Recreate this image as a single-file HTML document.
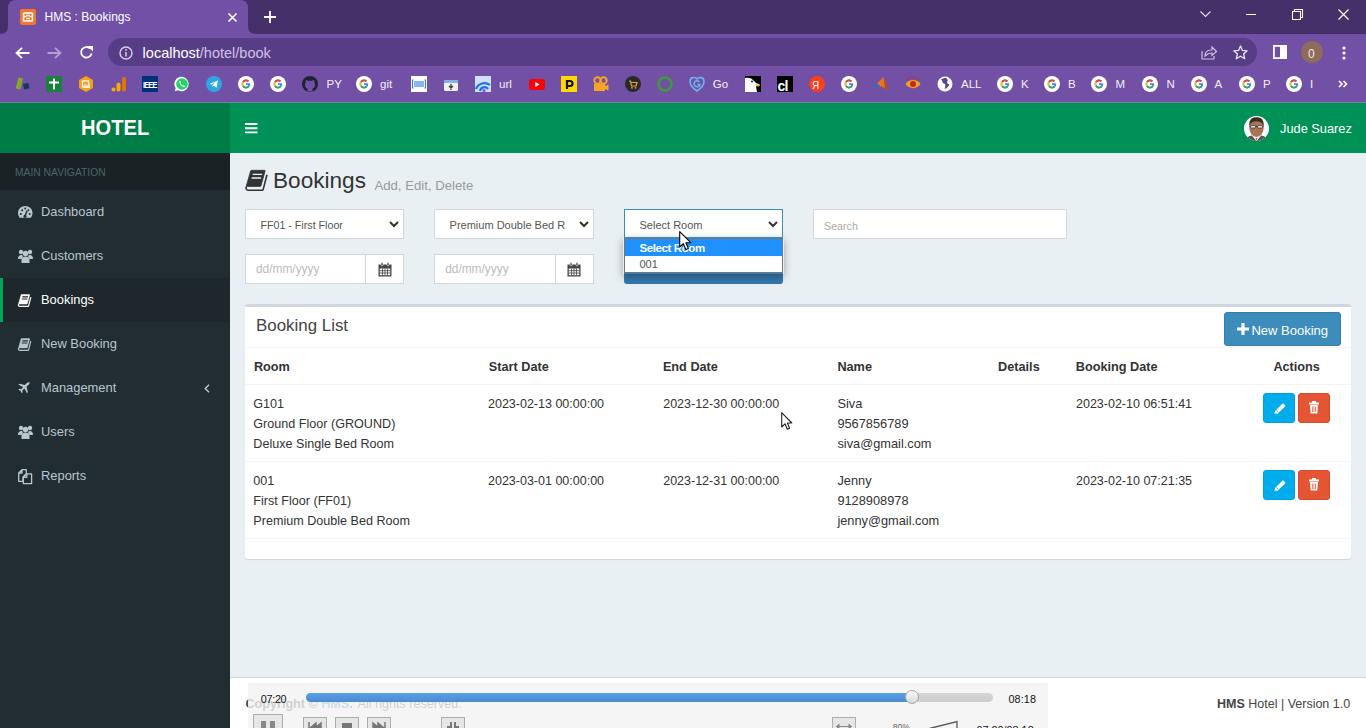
<!DOCTYPE html>
<html><head><meta charset="utf-8"><style>
*{box-sizing:border-box;margin:0;padding:0}
html,body{width:1366px;height:728px;overflow:hidden;background:#e9f0f3;font-family:"Liberation Sans",sans-serif;color:#333;position:relative}
.a{position:absolute}
.t{position:absolute;line-height:1;white-space:nowrap}
svg{position:absolute;overflow:visible}
</style></head><body>
<div class="a" style="left:0;top:0;width:1366px;height:34px;background:#45306a"></div>
<div class="a" style="left:0;top:34px;width:1366px;height:68px;background:#7150a6"></div>
<svg style="left:0;top:0" width="260" height="40"><path d="M0 34 Q8 34 8 26 L8 8 Q8 0 16 0 L240 0 Q248 0 248 8 L248 26 Q248 34 256 34 Z" fill="#7150a6"/></svg>
<div class="a" style="left:20px;top:9px;width:16px;height:16px;background:#f0782a;border-radius:2px"></div>
<svg style="left:20px;top:9px" width="16" height="16"><path d="M4.5 4 C3 4 3 7 4.5 7.5 C3 8 3 12 4.5 12 L11.5 12 C13 12 13 8 11.5 7.5 C13 7 13 4 11.5 4 Z M6 6.5 L10 6.5 M6 9.5 L10 9.5" stroke="#fff" stroke-width="1.6" fill="none"/></svg>
<div class="t" style="left:44.5px;top:11.34px;font-size:12px;color:#fff;font-weight:normal;">HMS : Bookings</div>

<svg style="left:228px;top:13px" width="9" height="9"><path d="M0.5 0.5 L8.5 8.5 M8.5 0.5 L0.5 8.5" stroke="#fff" stroke-width="1.6"/></svg>
<svg style="left:264px;top:11px" width="12" height="12"><path d="M6 0 V12 M0 6 H12" stroke="#fff" stroke-width="1.8"/></svg>
<svg style="left:1200px;top:11px" width="11" height="6"><path d="M0.5 0.5 L5.5 5.5 L10.5 0.5" stroke="#e8e0f0" stroke-width="1.1" fill="none"/></svg>
<div class="a" style="left:1246px;top:14px;width:10px;height:1px;background:#fff"></div>
<svg style="left:1292px;top:9px" width="11" height="11"><path d="M2.5 2.5 V0.5 H10.5 V8.5 H8.5 M0.5 2.5 H8.5 V10.5 H0.5 Z" stroke="#fff" stroke-width="1.1" fill="none"/></svg>
<svg style="left:1338px;top:9px" width="11" height="11"><path d="M0.5 0.5 L10.5 10.5 M10.5 0.5 L0.5 10.5" stroke="#fff" stroke-width="1.2"/></svg>
<svg style="left:15px;top:47px" width="15" height="12"><path d="M7 0.8 L1.5 6 L7 11.2 M1.5 6 H14.5" stroke="#fff" stroke-width="1.8" fill="none"/></svg>
<svg style="left:47px;top:47px" width="15" height="12"><path d="M8 0.8 L13.5 6 L8 11.2 M13.5 6 H0.5" stroke="#b49fd6" stroke-width="1.8" fill="none"/></svg>
<svg style="left:79px;top:45px" width="15" height="15"><path d="M12.6 8.5 A5.3 5.3 0 1 1 11.2 3.6" stroke="#fff" stroke-width="1.8" fill="none"/><path d="M8.5 1 L14 1 L14 6.5 Z" fill="#fff"/></svg>
<div class="a" style="left:108px;top:38px;width:1149px;height:28px;background:#573d86;border-radius:14px"></div>
<svg style="left:119px;top:46px" width="14" height="14"><circle cx="7" cy="7" r="6" stroke="#d8cdea" stroke-width="1.4" fill="none"/><path d="M7 6 V10.5" stroke="#d8cdea" stroke-width="1.5"/><circle cx="7" cy="3.9" r="0.9" fill="#d8cdea"/></svg>
<div class="t" style="left:142.6px;top:45.53px;font-size:14.5px;color:#fff;font-weight:normal;">localhost<span style="color:#cfc2e6">/hotel/book</span></div>

<svg style="left:1201px;top:45px" width="16" height="15"><path d="M1 6 V14 H13 V11" stroke="#cdbfe3" stroke-width="1.2" fill="none"/><path d="M4 11 C4 6 8 5 11 5 V2 L15.5 6.5 L11 10.5 V8 C8 8 6 9 4 11 Z" stroke="#cdbfe3" stroke-width="1.2" fill="none"/></svg>
<svg style="left:1233px;top:45px" width="15" height="15"><path d="M7.5 1 L9.4 5.4 L14.2 5.8 L10.6 9 L11.7 13.7 L7.5 11.2 L3.3 13.7 L4.4 9 L0.8 5.8 L5.6 5.4 Z" stroke="#ece6f5" stroke-width="1.3" fill="none" stroke-linejoin="round"/></svg>
<svg style="left:1273px;top:45px" width="14" height="14"><rect x="0.9" y="0.9" width="12.2" height="12.2" stroke="#fff" stroke-width="1.8" fill="none"/><rect x="7" y="1" width="6" height="12" fill="#fff"/></svg>
<div class="a" style="left:1301px;top:41px;width:22px;height:22px;border-radius:50%;background:#8e6b5c"></div>
<div class="t" style="left:1308px;top:47.54px;font-size:12px;color:#f3e8e0;font-weight:normal;">0</div>

<svg style="left:1342px;top:46px" width="4" height="14"><circle cx="2" cy="2" r="1.6" fill="#fff"/><circle cx="2" cy="7" r="1.6" fill="#fff"/><circle cx="2" cy="12" r="1.6" fill="#fff"/></svg>
<svg style="left:14px;top:76px" width="16" height="16"><path d="M1.5 12.5 L4.5 1.5 L9 2.5 L6.5 13.5 Z" fill="#8aa62a"/><rect x="9.5" y="7.5" width="5.5" height="5.5" transform="rotate(-12 12 10)" fill="#123a5c"/></svg>
<div class="a" style="left:46px;top:76px;width:16px;height:16px;background:#188038"></div><svg style="left:46px;top:76px" width="16" height="16"><path d="M3 6.5 H13 M8 2.5 V13.5" stroke="#fff" stroke-width="2"/></svg>
<svg style="left:78px;top:76px" width="16" height="16"><path d="M8 0 L15 4 V12 L8 16 L1 12 V4 Z" fill="#f4a11a"/><rect x="4.5" y="5" width="6" height="6" stroke="#fff" stroke-width="1.2" fill="none"/><path d="M7 8 V12 M9 9 V12 M11 7 V12" stroke="#fff" stroke-width="1"/></svg>
<svg style="left:111px;top:76px" width="16" height="16"><circle cx="2.5" cy="13.5" r="2" fill="#f9ab00"/><rect x="5.5" y="6.5" width="4" height="9" rx="2" fill="#f9ab00"/><rect x="11" y="1" width="4" height="14.5" rx="2" fill="#e37400"/></svg>
<div class="a" style="left:142px;top:76px;width:16px;height:16px;background:#00307a"></div>
<div class="t" style="left:143px;top:81.85px;font-size:7.5px;color:#fff;font-weight:bold;letter-spacing:-0.9px;transform:scaleY(1.3);transform-origin:0 70%">IEEE</div>

<svg style="left:174px;top:76px" width="16" height="16"><path d="M8 0.8 A7.2 7.2 0 1 1 4 14.3 L0.8 15.2 L1.7 12.1 A7.2 7.2 0 0 1 8 0.8 Z" fill="#fff"/><circle cx="8" cy="8" r="5.8" fill="#25d366"/><path d="M5.5 4.8 C5 5.5 5 7 6.5 9 C8 10.8 9.8 11.5 10.6 11 L11 10 L9.6 9.2 L9 9.8 C8.2 9.5 7 8.3 6.6 7.5 L7.1 6.8 L6.4 5 Z" fill="#fff"/></svg>
<svg style="left:206px;top:76px" width="16" height="16"><circle cx="8" cy="8" r="8" fill="#2ea6e3"/><path d="M3.5 7.8 L12 4.5 L10.6 11.8 L7.8 9.7 L6.4 11 L6.5 9 L10.5 5.6 L5.6 8.6 Z" fill="#fff"/></svg>
<svg style="left:238px;top:76px" width="16" height="16"><circle cx="8" cy="8" r="8" fill="#fff"/><path d="M11.9 7.3 H8 V9 H10.2 C9.9 10.2 9 10.8 8 10.8 C6.4 10.8 5.2 9.5 5.2 8 C5.2 6.5 6.4 5.2 8 5.2 C8.7 5.2 9.3 5.4 9.8 5.9 L11 4.7 C10.2 4 9.2 3.6 8 3.6 C5.6 3.6 3.6 5.6 3.6 8 C3.6 10.4 5.6 12.4 8 12.4 C10.4 12.4 12.2 10.7 12.2 8.1 C12.2 7.8 12 7.5 11.9 7.3 Z" fill="#4a86e8"/><path d="M3.6 8 C3.6 6.9 4 6 4.6 5.2 L5.9 6.3 C5.5 6.8 5.2 7.4 5.2 8 C5.2 8.6 5.4 9.2 5.8 9.7 L4.6 10.8 C4 10 3.6 9.1 3.6 8 Z" fill="#fbbc05"/><path d="M4.6 5.2 C5.4 4.2 6.6 3.6 8 3.6 C9.2 3.6 10.2 4 11 4.7 L9.8 5.9 C9.3 5.4 8.7 5.2 8 5.2 C7.1 5.2 6.4 5.6 5.9 6.3 Z" fill="#ea4335"/><path d="M4.6 10.8 L5.8 9.7 C6.3 10.4 7.1 10.8 8 10.8 C8.8 10.8 9.5 10.5 10 10 L11.3 11.1 C10.5 11.9 9.3 12.4 8 12.4 C6.6 12.4 5.4 11.8 4.6 10.8 Z" fill="#34a853"/></svg>
<svg style="left:270px;top:76px" width="16" height="16"><circle cx="8" cy="8" r="8" fill="#fff"/><path d="M11.9 7.3 H8 V9 H10.2 C9.9 10.2 9 10.8 8 10.8 C6.4 10.8 5.2 9.5 5.2 8 C5.2 6.5 6.4 5.2 8 5.2 C8.7 5.2 9.3 5.4 9.8 5.9 L11 4.7 C10.2 4 9.2 3.6 8 3.6 C5.6 3.6 3.6 5.6 3.6 8 C3.6 10.4 5.6 12.4 8 12.4 C10.4 12.4 12.2 10.7 12.2 8.1 C12.2 7.8 12 7.5 11.9 7.3 Z" fill="#4a86e8"/><path d="M3.6 8 C3.6 6.9 4 6 4.6 5.2 L5.9 6.3 C5.5 6.8 5.2 7.4 5.2 8 C5.2 8.6 5.4 9.2 5.8 9.7 L4.6 10.8 C4 10 3.6 9.1 3.6 8 Z" fill="#fbbc05"/><path d="M4.6 5.2 C5.4 4.2 6.6 3.6 8 3.6 C9.2 3.6 10.2 4 11 4.7 L9.8 5.9 C9.3 5.4 8.7 5.2 8 5.2 C7.1 5.2 6.4 5.6 5.9 6.3 Z" fill="#ea4335"/><path d="M4.6 10.8 L5.8 9.7 C6.3 10.4 7.1 10.8 8 10.8 C8.8 10.8 9.5 10.5 10 10 L11.3 11.1 C10.5 11.9 9.3 12.4 8 12.4 C6.6 12.4 5.4 11.8 4.6 10.8 Z" fill="#34a853"/></svg>
<svg style="left:302px;top:76px" width="16" height="16"><circle cx="8" cy="8" r="8" fill="#1f2331"/><path d="M5.5 15.5 V12.5 C4 12.3 3 11 3 8.5 C3 7.5 3.3 6.8 3.8 6.3 C3.6 5.7 3.6 4.8 4 4 C4.8 4 5.5 4.4 6.2 4.9 C7.3 4.6 8.7 4.6 9.8 4.9 C10.5 4.4 11.2 4 12 4 C12.4 4.8 12.4 5.7 12.2 6.3 C12.7 6.8 13 7.5 13 8.5 C13 11 12 12.3 10.5 12.5 V15.5 Z" fill="#7150a6"/></svg>
<div class="t" style="left:326.6px;top:79.47px;font-size:11.5px;color:#f4f0fa;font-weight:normal;">PY</div>

<svg style="left:356px;top:76px" width="16" height="16"><circle cx="8" cy="8" r="8" fill="#fff"/><path d="M11.9 7.3 H8 V9 H10.2 C9.9 10.2 9 10.8 8 10.8 C6.4 10.8 5.2 9.5 5.2 8 C5.2 6.5 6.4 5.2 8 5.2 C8.7 5.2 9.3 5.4 9.8 5.9 L11 4.7 C10.2 4 9.2 3.6 8 3.6 C5.6 3.6 3.6 5.6 3.6 8 C3.6 10.4 5.6 12.4 8 12.4 C10.4 12.4 12.2 10.7 12.2 8.1 C12.2 7.8 12 7.5 11.9 7.3 Z" fill="#4a86e8"/><path d="M3.6 8 C3.6 6.9 4 6 4.6 5.2 L5.9 6.3 C5.5 6.8 5.2 7.4 5.2 8 C5.2 8.6 5.4 9.2 5.8 9.7 L4.6 10.8 C4 10 3.6 9.1 3.6 8 Z" fill="#fbbc05"/><path d="M4.6 5.2 C5.4 4.2 6.6 3.6 8 3.6 C9.2 3.6 10.2 4 11 4.7 L9.8 5.9 C9.3 5.4 8.7 5.2 8 5.2 C7.1 5.2 6.4 5.6 5.9 6.3 Z" fill="#ea4335"/><path d="M4.6 10.8 L5.8 9.7 C6.3 10.4 7.1 10.8 8 10.8 C8.8 10.8 9.5 10.5 10 10 L11.3 11.1 C10.5 11.9 9.3 12.4 8 12.4 C6.6 12.4 5.4 11.8 4.6 10.8 Z" fill="#34a853"/></svg>
<div class="t" style="left:380px;top:79.47px;font-size:11.5px;color:#f4f0fa;font-weight:normal;">git</div>

<div class="a" style="left:411px;top:76px;width:16px;height:16px;background:#fff"></div><svg style="left:411px;top:76px" width="16" height="16"><path d="M2.5 4 H1.5 V12 H2.5 M13.5 4 H14.5 V12 H13.5 M4 5 V11 M6 5 V11 M8 5 V11 M10 5 V11 M12 5 V11" stroke="#2b7de0" stroke-width="1.1" fill="none"/></svg>
<svg style="left:443px;top:77px" width="16" height="16"><rect x="1" y="3" width="14" height="11" rx="1.5" fill="#eef2f8"/><rect x="1" y="3" width="14" height="3" fill="#8ab0e6"/><path d="M6 9 L8 11 L10 9 M8 7 V13" stroke="#444" stroke-width="1.4" fill="none"/></svg>
<svg style="left:475px;top:76px" width="16" height="16"><rect x="0" y="0" width="16" height="16" fill="#cfe0f8"/><path d="M1 13 A9 9 0 0 1 15 9" stroke="#1a73e8" stroke-width="2.2" fill="none"/><path d="M5 15 A4.5 4.5 0 0 1 13 13" stroke="#1a73e8" stroke-width="2.2" fill="none"/><circle cx="9" cy="14.5" r="1.6" fill="#a142f4"/></svg>
<div class="t" style="left:499px;top:79.47px;font-size:11.5px;color:#f4f0fa;font-weight:normal;">url</div>

<div class="a" style="left:529px;top:79px;width:16px;height:11px;background:#f00;border-radius:3px"></div><svg style="left:529px;top:79px" width="16" height="11"><path d="M6.3 3 L10.5 5.5 L6.3 8 Z" fill="#fff"/></svg>
<div class="a" style="left:561px;top:76px;width:16px;height:16px;background:#fdd800"></div><svg style="left:561px;top:76px" width="16" height="16"><path d="M6 13 V5 H9 A2.5 2.5 0 0 1 9 10 H6" stroke="#111" stroke-width="2.2" fill="none"/></svg>
<svg style="left:593px;top:76px" width="16" height="16"><circle cx="4.5" cy="4.5" r="3.2" fill="none" stroke="#f6a623" stroke-width="2"/><circle cx="10.5" cy="4.5" r="3.2" fill="none" stroke="#f6a623" stroke-width="2"/><rect x="1" y="8" width="11" height="7" fill="#f6a623"/><path d="M12 10 L15.5 8.5 V14.5 L12 13 Z" fill="#f6a623"/></svg>
<svg style="left:625px;top:76px" width="16" height="16"><circle cx="8" cy="8" r="8" fill="#2a2a2a"/><path d="M4 5 H5.5 L6.5 10 H11 L12 6.5 H6" stroke="#e8a23a" stroke-width="1.2" fill="none"/><circle cx="7" cy="11.8" r="0.9" fill="#e8a23a"/><circle cx="10.5" cy="11.8" r="0.9" fill="#e8a23a"/></svg>
<svg style="left:657px;top:76px" width="16" height="16"><circle cx="8" cy="8" r="6.5" fill="none" stroke="#3f9a3c" stroke-width="2.6"/></svg>
<svg style="left:689px;top:76px" width="16" height="16"><path d="M8 3 C6 0.5 1 1 1 5.5 C1 10 5 13 8 15 C11 13 15 10 15 5.5 C15 1 10 0.5 8 3 Z" fill="none" stroke="#6bb7f0" stroke-width="1.6"/><path d="M10.5 6 A3 3 0 1 0 11 8.5 H8.5" fill="none" stroke="#6bb7f0" stroke-width="1.5"/></svg>
<div class="t" style="left:712.8px;top:79.47px;font-size:11.5px;color:#f4f0fa;font-weight:normal;">Go</div>

<div class="a" style="left:745px;top:76px;width:16px;height:16px;background:#000"></div><svg style="left:745px;top:76px" width="16" height="16"><path d="M0 16 V2 C3 1 7 2 9 5 L11 7 L15 8.5 L11 10.5 L12 16 Z" fill="#fff"/><path d="M10 8 L15.5 9 L13 11 Z" fill="#f29c1f"/><circle cx="7" cy="5.5" r="0.9" fill="#000"/></svg>
<div class="a" style="left:777px;top:76px;width:16px;height:16px;background:#000"></div>
<div class="t" style="left:777.5px;top:78.85px;font-size:14px;color:#fff;font-weight:bold;letter-spacing:-0.8px">cl</div>

<svg style="left:809px;top:76px" width="16" height="16"><circle cx="8" cy="8" r="8" fill="#fc3f1d"/></svg>
<div class="t" style="left:804.5px;top:80.73px;font-size:10px;color:#fff;font-weight:normal;left:812px">Я</div>

<svg style="left:841px;top:76px" width="16" height="16"><circle cx="8" cy="8" r="8" fill="#fff"/><path d="M11.9 7.3 H8 V9 H10.2 C9.9 10.2 9 10.8 8 10.8 C6.4 10.8 5.2 9.5 5.2 8 C5.2 6.5 6.4 5.2 8 5.2 C8.7 5.2 9.3 5.4 9.8 5.9 L11 4.7 C10.2 4 9.2 3.6 8 3.6 C5.6 3.6 3.6 5.6 3.6 8 C3.6 10.4 5.6 12.4 8 12.4 C10.4 12.4 12.2 10.7 12.2 8.1 C12.2 7.8 12 7.5 11.9 7.3 Z" fill="#4a86e8"/><path d="M3.6 8 C3.6 6.9 4 6 4.6 5.2 L5.9 6.3 C5.5 6.8 5.2 7.4 5.2 8 C5.2 8.6 5.4 9.2 5.8 9.7 L4.6 10.8 C4 10 3.6 9.1 3.6 8 Z" fill="#fbbc05"/><path d="M4.6 5.2 C5.4 4.2 6.6 3.6 8 3.6 C9.2 3.6 10.2 4 11 4.7 L9.8 5.9 C9.3 5.4 8.7 5.2 8 5.2 C7.1 5.2 6.4 5.6 5.9 6.3 Z" fill="#ea4335"/><path d="M4.6 10.8 L5.8 9.7 C6.3 10.4 7.1 10.8 8 10.8 C8.8 10.8 9.5 10.5 10 10 L11.3 11.1 C10.5 11.9 9.3 12.4 8 12.4 C6.6 12.4 5.4 11.8 4.6 10.8 Z" fill="#34a853"/></svg>
<svg style="left:873px;top:76px" width="16" height="16"><path d="M0.5 9.5 L4 7.5 L7 10 L5 12 Z" fill="#2c6ec7"/><path d="M4 7.5 L10.5 1 L15.5 14.5 L12 12 L7 10 Z" fill="#e8751a"/><path d="M10.5 1 L12 12 L15.5 14.5 Z" fill="#c0440f"/></svg>
<svg style="left:905px;top:76px" width="16" height="16"><path d="M0.5 8 C4 2.5 12 2.5 15.5 8 C12 13.5 4 13.5 0.5 8 Z" fill="#f2a31a"/><circle cx="8" cy="8" r="3" fill="#c4281c"/><path d="M2 4 L3 2 M5 2.5 L5.5 0.5 M8 2 V0 M11 2.5 L10.5 0.5 M14 4 L13 2" stroke="#c4281c" stroke-width="1"/></svg>
<svg style="left:937px;top:76px" width="16" height="16"><circle cx="8" cy="8" r="7.5" fill="#fff"/><path d="M4 3.5 C6 5 5 7 7 7.5 C9 8 8.5 10 7.5 13 C10 12 12 10.5 12.5 8 C11 9 9.5 7 10.5 5 C11 4 10 2.5 9 2 C7 2 5.5 2.5 4 3.5 Z" fill="#5a43a0"/></svg>
<div class="t" style="left:961px;top:79.47px;font-size:11.5px;color:#f4f0fa;font-weight:normal;">ALL</div>

<svg style="left:997px;top:76px" width="16" height="16"><circle cx="8" cy="8" r="8" fill="#fff"/><path d="M11.9 7.3 H8 V9 H10.2 C9.9 10.2 9 10.8 8 10.8 C6.4 10.8 5.2 9.5 5.2 8 C5.2 6.5 6.4 5.2 8 5.2 C8.7 5.2 9.3 5.4 9.8 5.9 L11 4.7 C10.2 4 9.2 3.6 8 3.6 C5.6 3.6 3.6 5.6 3.6 8 C3.6 10.4 5.6 12.4 8 12.4 C10.4 12.4 12.2 10.7 12.2 8.1 C12.2 7.8 12 7.5 11.9 7.3 Z" fill="#4a86e8"/><path d="M3.6 8 C3.6 6.9 4 6 4.6 5.2 L5.9 6.3 C5.5 6.8 5.2 7.4 5.2 8 C5.2 8.6 5.4 9.2 5.8 9.7 L4.6 10.8 C4 10 3.6 9.1 3.6 8 Z" fill="#fbbc05"/><path d="M4.6 5.2 C5.4 4.2 6.6 3.6 8 3.6 C9.2 3.6 10.2 4 11 4.7 L9.8 5.9 C9.3 5.4 8.7 5.2 8 5.2 C7.1 5.2 6.4 5.6 5.9 6.3 Z" fill="#ea4335"/><path d="M4.6 10.8 L5.8 9.7 C6.3 10.4 7.1 10.8 8 10.8 C8.8 10.8 9.5 10.5 10 10 L11.3 11.1 C10.5 11.9 9.3 12.4 8 12.4 C6.6 12.4 5.4 11.8 4.6 10.8 Z" fill="#34a853"/></svg>
<div class="t" style="left:1021px;top:79.47px;font-size:11.5px;color:#f4f0fa;font-weight:normal;">K</div>

<svg style="left:1044px;top:76px" width="16" height="16"><circle cx="8" cy="8" r="8" fill="#fff"/><path d="M11.9 7.3 H8 V9 H10.2 C9.9 10.2 9 10.8 8 10.8 C6.4 10.8 5.2 9.5 5.2 8 C5.2 6.5 6.4 5.2 8 5.2 C8.7 5.2 9.3 5.4 9.8 5.9 L11 4.7 C10.2 4 9.2 3.6 8 3.6 C5.6 3.6 3.6 5.6 3.6 8 C3.6 10.4 5.6 12.4 8 12.4 C10.4 12.4 12.2 10.7 12.2 8.1 C12.2 7.8 12 7.5 11.9 7.3 Z" fill="#4a86e8"/><path d="M3.6 8 C3.6 6.9 4 6 4.6 5.2 L5.9 6.3 C5.5 6.8 5.2 7.4 5.2 8 C5.2 8.6 5.4 9.2 5.8 9.7 L4.6 10.8 C4 10 3.6 9.1 3.6 8 Z" fill="#fbbc05"/><path d="M4.6 5.2 C5.4 4.2 6.6 3.6 8 3.6 C9.2 3.6 10.2 4 11 4.7 L9.8 5.9 C9.3 5.4 8.7 5.2 8 5.2 C7.1 5.2 6.4 5.6 5.9 6.3 Z" fill="#ea4335"/><path d="M4.6 10.8 L5.8 9.7 C6.3 10.4 7.1 10.8 8 10.8 C8.8 10.8 9.5 10.5 10 10 L11.3 11.1 C10.5 11.9 9.3 12.4 8 12.4 C6.6 12.4 5.4 11.8 4.6 10.8 Z" fill="#34a853"/></svg>
<div class="t" style="left:1068px;top:79.47px;font-size:11.5px;color:#f4f0fa;font-weight:normal;">B</div>

<svg style="left:1091px;top:76px" width="16" height="16"><circle cx="8" cy="8" r="8" fill="#fff"/><path d="M11.9 7.3 H8 V9 H10.2 C9.9 10.2 9 10.8 8 10.8 C6.4 10.8 5.2 9.5 5.2 8 C5.2 6.5 6.4 5.2 8 5.2 C8.7 5.2 9.3 5.4 9.8 5.9 L11 4.7 C10.2 4 9.2 3.6 8 3.6 C5.6 3.6 3.6 5.6 3.6 8 C3.6 10.4 5.6 12.4 8 12.4 C10.4 12.4 12.2 10.7 12.2 8.1 C12.2 7.8 12 7.5 11.9 7.3 Z" fill="#4a86e8"/><path d="M3.6 8 C3.6 6.9 4 6 4.6 5.2 L5.9 6.3 C5.5 6.8 5.2 7.4 5.2 8 C5.2 8.6 5.4 9.2 5.8 9.7 L4.6 10.8 C4 10 3.6 9.1 3.6 8 Z" fill="#fbbc05"/><path d="M4.6 5.2 C5.4 4.2 6.6 3.6 8 3.6 C9.2 3.6 10.2 4 11 4.7 L9.8 5.9 C9.3 5.4 8.7 5.2 8 5.2 C7.1 5.2 6.4 5.6 5.9 6.3 Z" fill="#ea4335"/><path d="M4.6 10.8 L5.8 9.7 C6.3 10.4 7.1 10.8 8 10.8 C8.8 10.8 9.5 10.5 10 10 L11.3 11.1 C10.5 11.9 9.3 12.4 8 12.4 C6.6 12.4 5.4 11.8 4.6 10.8 Z" fill="#34a853"/></svg>
<div class="t" style="left:1115.5px;top:79.47px;font-size:11.5px;color:#f4f0fa;font-weight:normal;">M</div>

<svg style="left:1142px;top:76px" width="16" height="16"><circle cx="8" cy="8" r="8" fill="#fff"/><path d="M11.9 7.3 H8 V9 H10.2 C9.9 10.2 9 10.8 8 10.8 C6.4 10.8 5.2 9.5 5.2 8 C5.2 6.5 6.4 5.2 8 5.2 C8.7 5.2 9.3 5.4 9.8 5.9 L11 4.7 C10.2 4 9.2 3.6 8 3.6 C5.6 3.6 3.6 5.6 3.6 8 C3.6 10.4 5.6 12.4 8 12.4 C10.4 12.4 12.2 10.7 12.2 8.1 C12.2 7.8 12 7.5 11.9 7.3 Z" fill="#4a86e8"/><path d="M3.6 8 C3.6 6.9 4 6 4.6 5.2 L5.9 6.3 C5.5 6.8 5.2 7.4 5.2 8 C5.2 8.6 5.4 9.2 5.8 9.7 L4.6 10.8 C4 10 3.6 9.1 3.6 8 Z" fill="#fbbc05"/><path d="M4.6 5.2 C5.4 4.2 6.6 3.6 8 3.6 C9.2 3.6 10.2 4 11 4.7 L9.8 5.9 C9.3 5.4 8.7 5.2 8 5.2 C7.1 5.2 6.4 5.6 5.9 6.3 Z" fill="#ea4335"/><path d="M4.6 10.8 L5.8 9.7 C6.3 10.4 7.1 10.8 8 10.8 C8.8 10.8 9.5 10.5 10 10 L11.3 11.1 C10.5 11.9 9.3 12.4 8 12.4 C6.6 12.4 5.4 11.8 4.6 10.8 Z" fill="#34a853"/></svg>
<div class="t" style="left:1166.4px;top:79.47px;font-size:11.5px;color:#f4f0fa;font-weight:normal;">N</div>

<svg style="left:1191px;top:76px" width="16" height="16"><circle cx="8" cy="8" r="8" fill="#fff"/><path d="M11.9 7.3 H8 V9 H10.2 C9.9 10.2 9 10.8 8 10.8 C6.4 10.8 5.2 9.5 5.2 8 C5.2 6.5 6.4 5.2 8 5.2 C8.7 5.2 9.3 5.4 9.8 5.9 L11 4.7 C10.2 4 9.2 3.6 8 3.6 C5.6 3.6 3.6 5.6 3.6 8 C3.6 10.4 5.6 12.4 8 12.4 C10.4 12.4 12.2 10.7 12.2 8.1 C12.2 7.8 12 7.5 11.9 7.3 Z" fill="#4a86e8"/><path d="M3.6 8 C3.6 6.9 4 6 4.6 5.2 L5.9 6.3 C5.5 6.8 5.2 7.4 5.2 8 C5.2 8.6 5.4 9.2 5.8 9.7 L4.6 10.8 C4 10 3.6 9.1 3.6 8 Z" fill="#fbbc05"/><path d="M4.6 5.2 C5.4 4.2 6.6 3.6 8 3.6 C9.2 3.6 10.2 4 11 4.7 L9.8 5.9 C9.3 5.4 8.7 5.2 8 5.2 C7.1 5.2 6.4 5.6 5.9 6.3 Z" fill="#ea4335"/><path d="M4.6 10.8 L5.8 9.7 C6.3 10.4 7.1 10.8 8 10.8 C8.8 10.8 9.5 10.5 10 10 L11.3 11.1 C10.5 11.9 9.3 12.4 8 12.4 C6.6 12.4 5.4 11.8 4.6 10.8 Z" fill="#34a853"/></svg>
<div class="t" style="left:1214.6px;top:79.47px;font-size:11.5px;color:#f4f0fa;font-weight:normal;">A</div>

<svg style="left:1239px;top:76px" width="16" height="16"><circle cx="8" cy="8" r="8" fill="#fff"/><path d="M11.9 7.3 H8 V9 H10.2 C9.9 10.2 9 10.8 8 10.8 C6.4 10.8 5.2 9.5 5.2 8 C5.2 6.5 6.4 5.2 8 5.2 C8.7 5.2 9.3 5.4 9.8 5.9 L11 4.7 C10.2 4 9.2 3.6 8 3.6 C5.6 3.6 3.6 5.6 3.6 8 C3.6 10.4 5.6 12.4 8 12.4 C10.4 12.4 12.2 10.7 12.2 8.1 C12.2 7.8 12 7.5 11.9 7.3 Z" fill="#4a86e8"/><path d="M3.6 8 C3.6 6.9 4 6 4.6 5.2 L5.9 6.3 C5.5 6.8 5.2 7.4 5.2 8 C5.2 8.6 5.4 9.2 5.8 9.7 L4.6 10.8 C4 10 3.6 9.1 3.6 8 Z" fill="#fbbc05"/><path d="M4.6 5.2 C5.4 4.2 6.6 3.6 8 3.6 C9.2 3.6 10.2 4 11 4.7 L9.8 5.9 C9.3 5.4 8.7 5.2 8 5.2 C7.1 5.2 6.4 5.6 5.9 6.3 Z" fill="#ea4335"/><path d="M4.6 10.8 L5.8 9.7 C6.3 10.4 7.1 10.8 8 10.8 C8.8 10.8 9.5 10.5 10 10 L11.3 11.1 C10.5 11.9 9.3 12.4 8 12.4 C6.6 12.4 5.4 11.8 4.6 10.8 Z" fill="#34a853"/></svg>
<div class="t" style="left:1263px;top:79.47px;font-size:11.5px;color:#f4f0fa;font-weight:normal;">P</div>

<svg style="left:1286px;top:76px" width="16" height="16"><circle cx="8" cy="8" r="8" fill="#fff"/><path d="M11.9 7.3 H8 V9 H10.2 C9.9 10.2 9 10.8 8 10.8 C6.4 10.8 5.2 9.5 5.2 8 C5.2 6.5 6.4 5.2 8 5.2 C8.7 5.2 9.3 5.4 9.8 5.9 L11 4.7 C10.2 4 9.2 3.6 8 3.6 C5.6 3.6 3.6 5.6 3.6 8 C3.6 10.4 5.6 12.4 8 12.4 C10.4 12.4 12.2 10.7 12.2 8.1 C12.2 7.8 12 7.5 11.9 7.3 Z" fill="#4a86e8"/><path d="M3.6 8 C3.6 6.9 4 6 4.6 5.2 L5.9 6.3 C5.5 6.8 5.2 7.4 5.2 8 C5.2 8.6 5.4 9.2 5.8 9.7 L4.6 10.8 C4 10 3.6 9.1 3.6 8 Z" fill="#fbbc05"/><path d="M4.6 5.2 C5.4 4.2 6.6 3.6 8 3.6 C9.2 3.6 10.2 4 11 4.7 L9.8 5.9 C9.3 5.4 8.7 5.2 8 5.2 C7.1 5.2 6.4 5.6 5.9 6.3 Z" fill="#ea4335"/><path d="M4.6 10.8 L5.8 9.7 C6.3 10.4 7.1 10.8 8 10.8 C8.8 10.8 9.5 10.5 10 10 L11.3 11.1 C10.5 11.9 9.3 12.4 8 12.4 C6.6 12.4 5.4 11.8 4.6 10.8 Z" fill="#34a853"/></svg>
<div class="t" style="left:1310px;top:79.47px;font-size:11.5px;color:#f4f0fa;font-weight:normal;">I</div>

<svg style="left:1338px;top:80px" width="10" height="8"><path d="M1 1 L4 4 L1 7 M5.5 1 L8.5 4 L5.5 7" stroke="#fff" stroke-width="1.6" fill="none"/></svg>
<div class="a" style="left:0;top:102px;width:1366px;height:1px;background:#6f86aa"></div>
<div class="a" style="left:0;top:103px;width:230px;height:50px;background:#007d46"></div>
<div class="a" style="left:230px;top:103px;width:1136px;height:50px;background:#009157"></div>
<div class="t" style="left:81px;top:117.28px;font-size:22px;color:#fff;font-weight:bold;transform:scaleX(0.915);transform-origin:0 0">HOTEL</div>

<svg style="left:245px;top:122px" width="13" height="12"><path d="M0 2 H12.5 M0 6.2 H12.5 M0 10.4 H12.5" stroke="#fff" stroke-width="1.9"/></svg>
<svg style="left:1244px;top:116px" width="25" height="25"><circle cx="12.5" cy="12.5" r="12.5" fill="#fff"/><clipPath id="cc"><circle cx="12.5" cy="12.5" r="12.4"/></clipPath><g clip-path="url(#cc)"><path d="M1 25 C2 21 5 20 8 19.5 L12.5 25 L17 19.5 C20 20 23 21 24 25 Z" fill="#5a5450"/><path d="M8 19.5 L12.5 25 L17 19.5 Z" fill="#f2eeee"/><path d="M11.7 22 L12.5 25 L13.3 22 Z" fill="#c8442e"/><ellipse cx="12.5" cy="11.8" rx="7.2" ry="9.2" fill="#a87552"/><path d="M5.3 11 C4.6 3.5 8 1.2 12.5 1.2 C17 1.2 20.4 3.5 19.7 11 C19 7.5 17.5 5.5 12.5 5.2 C7.5 5.5 6 7.5 5.3 11 Z" fill="#3b2a1e"/><path d="M5.5 10.6 H19.5" stroke="#2a2a2a" stroke-width="0.9"/><rect x="6.6" y="9.6" width="4.8" height="2.4" rx="0.6" fill="#e8e8e8" stroke="#2a2a2a" stroke-width="0.7"/><rect x="13.6" y="9.6" width="4.8" height="2.4" rx="0.6" fill="#e8e8e8" stroke="#2a2a2a" stroke-width="0.7"/></g></svg>
<div class="t" style="left:1280px;top:122.86px;font-size:12.8px;color:#fff;font-weight:normal;">Jude Suarez</div>

<div class="a" style="left:0;top:153px;width:230px;height:575px;background:#222d32"></div>
<div class="a" style="left:0;top:153px;width:230px;height:37px;background:#1a2226"></div>
<div class="t" style="left:15px;top:167.98px;font-size:10.3px;color:#4b646f;font-weight:normal;">MAIN NAVIGATION</div>

<div class="a" style="left:0;top:278px;width:230px;height:44px;background:#1e282c"></div>
<div class="a" style="left:0;top:278px;width:3px;height:44px;background:#00a65a"></div>
<div class="t" style="left:41px;top:206.38px;font-size:12.9px;color:#b8c7ce;font-weight:normal;">Dashboard</div>

<div class="t" style="left:41px;top:250.38px;font-size:12.9px;color:#b8c7ce;font-weight:normal;">Customers</div>

<div class="t" style="left:41px;top:294.38px;font-size:12.9px;color:#fff;font-weight:normal;">Bookings</div>

<div class="t" style="left:41px;top:338.38px;font-size:12.9px;color:#b8c7ce;font-weight:normal;">New Booking</div>

<div class="t" style="left:41px;top:382.38px;font-size:12.9px;color:#b8c7ce;font-weight:normal;">Management</div>

<div class="t" style="left:41px;top:426.38px;font-size:12.9px;color:#b8c7ce;font-weight:normal;">Users</div>

<div class="t" style="left:41px;top:470.38px;font-size:12.9px;color:#b8c7ce;font-weight:normal;">Reports</div>

<svg style="left:18px;top:206px" width="15" height="12"><path d="M1.6 11.8 A7.3 7.3 0 1 1 12.9 11.8 Z" fill="#b8c7ce"/><circle cx="2.8" cy="8" r="1" fill="#222d32"/><circle cx="4.2" cy="4.2" r="1" fill="#222d32"/><circle cx="7.25" cy="2.6" r="1" fill="#222d32"/><circle cx="11.7" cy="8" r="1" fill="#222d32"/><circle cx="10.3" cy="4.2" r="1" fill="#222d32"/><path d="M7 10.5 L9 4.8" stroke="#222d32" stroke-width="1.4"/><circle cx="7" cy="10.3" r="1.5" fill="#222d32"/></svg>
<svg style="left:18px;top:249px" width="15" height="14"><circle cx="3" cy="3" r="2.2" fill="#b8c7ce"/><circle cx="12" cy="3" r="2.2" fill="#b8c7ce"/><circle cx="7.5" cy="4.5" r="2.8" fill="#b8c7ce"/><path d="M0 10 C0 7 1.5 6 3 6 C4 6 4.5 6.5 5 7 L3.5 10 Z" fill="#b8c7ce"/><path d="M15 10 C15 7 13.5 6 12 6 C11 6 10.5 6.5 10 7 L11.5 10 Z" fill="#b8c7ce"/><path d="M3.5 14 V11 C3.5 8.5 5 7.5 7.5 7.5 C10 7.5 11.5 8.5 11.5 11 V14 Z" fill="#b8c7ce"/></svg>
<svg style="left:18px;top:425px" width="15" height="14"><circle cx="3" cy="3" r="2.2" fill="#b8c7ce"/><circle cx="12" cy="3" r="2.2" fill="#b8c7ce"/><circle cx="7.5" cy="4.5" r="2.8" fill="#b8c7ce"/><path d="M0 10 C0 7 1.5 6 3 6 C4 6 4.5 6.5 5 7 L3.5 10 Z" fill="#b8c7ce"/><path d="M15 10 C15 7 13.5 6 12 6 C11 6 10.5 6.5 10 7 L11.5 10 Z" fill="#b8c7ce"/><path d="M3.5 14 V11 C3.5 8.5 5 7.5 7.5 7.5 C10 7.5 11.5 8.5 11.5 11 V14 Z" fill="#b8c7ce"/></svg>
<svg style="left:17.5px;top:293.5px" width="13.5" height="12.8" viewBox="1.5 1.5 22.5 21.5"><path d="M7.4 2.3 H20.6 Q21.3 2.3 21.1 3 L17 17.8 Q16.8 18.4 16.2 18.4 H2.2 L6.6 2.9 Q6.8 2.3 7.4 2.3 Z" fill="#fff" stroke="#fff" stroke-width="0.8" stroke-linejoin="round"/><path d="M23 6.8 L19.2 21.4 Q19 22.3 18.2 22.3 H4.6 Q1.6 22.3 2.2 18.6" stroke="#fff" stroke-width="2" fill="none"/><path d="M8.7 6.3 H18.2 M7.6 10 H17.1" stroke="#1e282c" stroke-width="1.8"/></svg>
<svg style="left:17.5px;top:337.5px" width="13.5" height="12.8" viewBox="1.5 1.5 22.5 21.5"><path d="M7.4 2.3 H20.6 Q21.3 2.3 21.1 3 L17 17.8 Q16.8 18.4 16.2 18.4 H2.2 L6.6 2.9 Q6.8 2.3 7.4 2.3 Z" fill="#b8c7ce" stroke="#b8c7ce" stroke-width="0.8" stroke-linejoin="round"/><path d="M23 6.8 L19.2 21.4 Q19 22.3 18.2 22.3 H4.6 Q1.6 22.3 2.2 18.6" stroke="#b8c7ce" stroke-width="2" fill="none"/><path d="M8.7 6.3 H18.2 M7.6 10 H17.1" stroke="#222d32" stroke-width="1.8"/></svg>
<svg style="left:17.5px;top:381.5px" width="12" height="12" viewBox="0 0 14 14"><path d="M13.5 0.5 C12.5 0 11 0.5 10 1.5 L8 3.5 L1.5 2 L0.5 3 L6 6 L3.5 8.5 L1.5 8 L0.5 9 L3 10.5 L4.5 13 L5.5 12 L5 10 L7.5 7.5 L10.5 13 L11.5 12 L10 5.5 L12 3.5 C13 2.5 13.8 1.2 13.5 0.5 Z" fill="#b8c7ce"/></svg>
<svg style="left:204px;top:384px" width="6" height="9"><path d="M5 0.8 L1.2 4.5 L5 8.2" stroke="#b8c7ce" stroke-width="1.4" fill="none"/></svg>
<svg style="left:18px;top:468.5px" width="15" height="16"><path d="M4 0.7 H8.3 V4.8 M8.3 4.8 L5 8 V12.3 H0.7 V4 L4 0.7 V4 H0.7" stroke="#b8c7ce" stroke-width="1.3" fill="none" stroke-linejoin="round"/><path d="M8.8 4.8 H13.6 V14.6 H5.3 V8.3 L8.8 4.8 V8.3 H5.3" stroke="#b8c7ce" stroke-width="1.3" fill="none" stroke-linejoin="round"/></svg>
<svg style="left:244px;top:168px" width="25" height="24"><path d="M7.4 2.3 H20.6 Q21.3 2.3 21.1 3 L17 17.8 Q16.8 18.4 16.2 18.4 H2.2 L6.6 2.9 Q6.8 2.3 7.4 2.3 Z" fill="#333" stroke="#333" stroke-width="0.8" stroke-linejoin="round"/><path d="M23 6.8 L19.2 21.4 Q19 22.3 18.2 22.3 H4.6 Q1.6 22.3 2.2 18.6" stroke="#333" stroke-width="1.6" fill="none"/><path d="M8.7 6.3 H18.2 M7.6 10 H17.1" stroke="#e9f0f3" stroke-width="1.3"/></svg>
<div class="t" style="left:273px;top:170.17px;font-size:22.6px;color:#333;font-weight:normal;">Bookings</div>

<div class="t" style="left:374.4px;top:178.53px;font-size:13.2px;color:#999;font-weight:normal;">Add, Edit, Delete</div>

<div class="a" style="left:245px;top:209px;width:159px;height:30px;background:#fff;border:1px solid #d2d6de;"></div>
<div class="t" style="left:260.4px;top:220.34px;font-size:10.7px;color:#555;font-weight:normal;">FF01 - First Floor</div>

<svg style="left:389px;top:221px" width="10" height="7"><path d="M1 1 L5 5 L9 1" stroke="#333" stroke-width="2" fill="none"/></svg>
<div class="a" style="left:434px;top:209px;width:160px;height:30px;background:#fff;border:1px solid #d2d6de;"></div>
<div class="t" style="left:449.6px;top:220.09px;font-size:11px;color:#555;font-weight:normal;">Premium Double Bed R</div>

<svg style="left:579px;top:221px" width="10" height="7"><path d="M1 1 L5 5 L9 1" stroke="#333" stroke-width="2" fill="none"/></svg>
<div class="a" style="left:624px;top:209px;width:159px;height:29px;background:#fff;border:1px solid #3c8dbc;"></div>
<div class="t" style="left:639.5px;top:220.29px;font-size:11px;color:#555;font-weight:normal;">Select Room</div>

<svg style="left:768px;top:221px" width="10" height="7"><path d="M1 1 L5 5 L9 1" stroke="#333" stroke-width="2" fill="none"/></svg>
<div class="a" style="left:813px;top:209px;width:254px;height:30px;background:#fff;border:1px solid #d2d6de;"></div>
<div class="t" style="left:824px;top:220.64px;font-size:10.7px;color:#aaa;font-weight:normal;">Search</div>

<div class="a" style="left:245px;top:254px;width:159px;height:30px;background:#fff;border:1px solid #d2d6de;"></div>
<div class="a" style="left:365px;top:254px;width:1px;height:30px;background:#d2d6de"></div>
<div class="t" style="left:256px;top:264.43px;font-size:11.9px;color:#bbb;font-weight:normal;">dd/mm/yyyy</div>

<svg style="left:378px;top:262px" width="14" height="15"><rect x="0.5" y="2.5" width="13" height="12" fill="#444"/><path d="M1.8 6.5 H12.2 V13.2 H1.8 Z" fill="#fff"/><path d="M1.8 8.7 H12.2 M1.8 11 H12.2 M4.5 6.5 V13.2 M7 6.5 V13.2 M9.5 6.5 V13.2" stroke="#444" stroke-width="0.8"/><rect x="3" y="0.5" width="2" height="3.5" rx="1" fill="#444" stroke="#fff" stroke-width="0.6"/><rect x="9" y="0.5" width="2" height="3.5" rx="1" fill="#444" stroke="#fff" stroke-width="0.6"/></svg>
<div class="a" style="left:434px;top:254px;width:160px;height:30px;background:#fff;border:1px solid #d2d6de;"></div>
<div class="a" style="left:555px;top:254px;width:1px;height:30px;background:#d2d6de"></div>
<div class="t" style="left:445.2px;top:264.43px;font-size:11.9px;color:#bbb;font-weight:normal;">dd/mm/yyyy</div>

<svg style="left:567px;top:262px" width="14" height="15"><rect x="0.5" y="2.5" width="13" height="12" fill="#444"/><path d="M1.8 6.5 H12.2 V13.2 H1.8 Z" fill="#fff"/><path d="M1.8 8.7 H12.2 M1.8 11 H12.2 M4.5 6.5 V13.2 M7 6.5 V13.2 M9.5 6.5 V13.2" stroke="#444" stroke-width="0.8"/><rect x="3" y="0.5" width="2" height="3.5" rx="1" fill="#444" stroke="#fff" stroke-width="0.6"/><rect x="9" y="0.5" width="2" height="3.5" rx="1" fill="#444" stroke="#fff" stroke-width="0.6"/></svg>
<div class="a" style="left:624px;top:254px;width:159px;height:30px;background:linear-gradient(#3c86bf,#3479b0);border-radius:3px"></div>
<div class="a" style="left:623px;top:237px;width:161px;height:37px;box-shadow:0 3px 8px rgba(0,0,0,0.35)"></div>
<div class="a" style="left:624px;top:238px;width:159px;height:35px;background:#fff;border:1px solid #767676"></div>
<div class="a" style="left:625px;top:239px;width:157px;height:17px;background:#1e90ff"></div>
<div class="t" style="left:639.5px;top:243.47px;font-size:11.5px;color:#fff;font-weight:bold;letter-spacing:-0.4px">Select Room</div>

<div class="t" style="left:639.5px;top:259.39px;font-size:11px;color:#555;font-weight:normal;">001</div>

<svg style="left:679px;top:231px" width="13" height="20"><path d="M0.7 0.7 V16 L4.3 12.6 L6.8 18.5 L9.3 17.4 L6.9 11.7 L11.8 11.7 Z" fill="#fff" stroke="#000" stroke-width="1.1" stroke-linejoin="round"/></svg>
<div class="a" style="left:245px;top:304px;width:1106px;height:255px;background:#fff;border-top:3px solid #d2d6de;border-radius:3px;box-shadow:0 1px 1px rgba(0,0,0,0.12)"></div>
<div class="t" style="left:256px;top:318.39px;font-size:16.9px;color:#444;font-weight:normal;">Booking List</div>

<div class="a" style="left:1224px;top:312px;width:117px;height:34px;background:#3c8dbc;border:1px solid #367fa9;border-radius:3px"></div>
<svg style="left:1237px;top:323px" width="12" height="12"><path d="M6 0 V12 M0 6 H12" stroke="#fff" stroke-width="3.2"/></svg>
<div class="t" style="left:1251.4px;top:324.00px;font-size:13px;color:#fff;font-weight:normal;">New Booking</div>

<div class="a" style="left:245px;top:347px;width:1106px;height:1px;background:#f4f4f4"></div>
<div class="a" style="left:245px;top:384px;width:1106px;height:1px;background:#f4f4f4"></div>
<div class="a" style="left:245px;top:461px;width:1106px;height:1px;background:#f4f4f4"></div>
<div class="a" style="left:245px;top:538px;width:1106px;height:1px;background:#f4f4f4"></div>
<div class="t" style="left:253.9px;top:360.75px;font-size:12.7px;color:#333;font-weight:bold;">Room</div>

<div class="t" style="left:488.8px;top:360.75px;font-size:12.7px;color:#333;font-weight:bold;">Start Date</div>

<div class="t" style="left:662.9px;top:360.75px;font-size:12.7px;color:#333;font-weight:bold;">End Date</div>

<div class="t" style="left:837.4px;top:360.75px;font-size:12.7px;color:#333;font-weight:bold;">Name</div>

<div class="t" style="left:998.1px;top:360.75px;font-size:12.7px;color:#333;font-weight:bold;">Details</div>

<div class="t" style="left:1075.8px;top:360.75px;font-size:12.7px;color:#333;font-weight:bold;">Booking Date</div>

<div class="t" style="left:1273.4px;top:360.75px;font-size:12.7px;color:#333;font-weight:bold;">Actions</div>

<div class="t" style="left:253.3px;top:397.73px;font-size:12.6px;color:#333;font-weight:normal;">G101</div>

<div class="t" style="left:253.3px;top:417.73px;font-size:12.6px;color:#333;font-weight:normal;">Ground Floor (GROUND)</div>

<div class="t" style="left:253.3px;top:437.73px;font-size:12.6px;color:#333;font-weight:normal;">Deluxe Single Bed Room</div>

<div class="t" style="left:488px;top:397.82px;font-size:12.5px;color:#333;font-weight:normal;">2023-02-13 00:00:00</div>

<div class="t" style="left:663.2px;top:397.82px;font-size:12.5px;color:#333;font-weight:normal;">2023-12-30 00:00:00</div>

<div class="t" style="left:837.4px;top:397.56px;font-size:12.8px;color:#333;font-weight:normal;">Siva</div>

<div class="t" style="left:837.4px;top:417.56px;font-size:12.8px;color:#333;font-weight:normal;">9567856789</div>

<div class="t" style="left:837.4px;top:437.56px;font-size:12.8px;color:#333;font-weight:normal;">siva@gmail.com</div>

<div class="t" style="left:1076px;top:397.82px;font-size:12.5px;color:#333;font-weight:normal;">2023-02-10 06:51:41</div>

<div class="a" style="left:1263px;top:393px;width:32px;height:30px;background:#00acec;border:1px solid #00a2dc;border-radius:3px"></div>
<svg style="left:1273.5px;top:402.5px" width="12" height="11"><path d="M0.5 10.8 L1 8 L8.3 0.8 Q9 0.2 9.7 0.8 L11 2.1 Q11.6 2.8 11 3.5 L3.6 10.8 Z" fill="#fff"/><path d="M2.2 7.2 L4.6 9.6" stroke="#00acec" stroke-width="0.7"/></svg>
<div class="a" style="left:1298px;top:393px;width:32px;height:30px;background:#e35533;border:1px solid #d64a2c;border-radius:3px"></div>
<svg style="left:1309px;top:401px" width="10" height="13"><rect x="0" y="1.5" width="10" height="2" fill="#fff"/><rect x="3" y="0" width="4" height="2" fill="#fff"/><path d="M1 4 H9 L8.3 12.5 H1.7 Z" fill="#fff"/><path d="M3.5 5.5 V11 M5 5.5 V11 M6.5 5.5 V11" stroke="#e35533" stroke-width="0.7"/></svg>
<div class="t" style="left:253.3px;top:474.73px;font-size:12.6px;color:#333;font-weight:normal;">001</div>

<div class="t" style="left:253.3px;top:494.73px;font-size:12.6px;color:#333;font-weight:normal;">First Floor (FF01)</div>

<div class="t" style="left:253.3px;top:514.73px;font-size:12.6px;color:#333;font-weight:normal;">Premium Double Bed Room</div>

<div class="t" style="left:488px;top:474.82px;font-size:12.5px;color:#333;font-weight:normal;">2023-03-01 00:00:00</div>

<div class="t" style="left:663.2px;top:474.82px;font-size:12.5px;color:#333;font-weight:normal;">2023-12-31 00:00:00</div>

<div class="t" style="left:837.4px;top:474.56px;font-size:12.8px;color:#333;font-weight:normal;">Jenny</div>

<div class="t" style="left:837.4px;top:494.56px;font-size:12.8px;color:#333;font-weight:normal;">9128908978</div>

<div class="t" style="left:837.4px;top:514.56px;font-size:12.8px;color:#333;font-weight:normal;">jenny@gmail.com</div>

<div class="t" style="left:1076px;top:474.82px;font-size:12.5px;color:#333;font-weight:normal;">2023-02-10 07:21:35</div>

<div class="a" style="left:1263px;top:470px;width:32px;height:30px;background:#00acec;border:1px solid #00a2dc;border-radius:3px"></div>
<svg style="left:1273.5px;top:479.5px" width="12" height="11"><path d="M0.5 10.8 L1 8 L8.3 0.8 Q9 0.2 9.7 0.8 L11 2.1 Q11.6 2.8 11 3.5 L3.6 10.8 Z" fill="#fff"/><path d="M2.2 7.2 L4.6 9.6" stroke="#00acec" stroke-width="0.7"/></svg>
<div class="a" style="left:1298px;top:470px;width:32px;height:30px;background:#e35533;border:1px solid #d64a2c;border-radius:3px"></div>
<svg style="left:1309px;top:478px" width="10" height="13"><rect x="0" y="1.5" width="10" height="2" fill="#fff"/><rect x="3" y="0" width="4" height="2" fill="#fff"/><path d="M1 4 H9 L8.3 12.5 H1.7 Z" fill="#fff"/><path d="M3.5 5.5 V11 M5 5.5 V11 M6.5 5.5 V11" stroke="#e35533" stroke-width="0.7"/></svg>
<svg style="left:781px;top:412px" width="12" height="19"><path d="M0.7 0.7 V15 L4 11.8 L6.3 17.2 L8.6 16.2 L6.4 11 L10.8 11 Z" fill="#fff" stroke="#222" stroke-width="1.1" stroke-linejoin="round"/></svg>
<div class="a" style="left:230px;top:677px;width:1136px;height:51px;background:#fff;border-top:1px solid #d2d6de"></div>
<div class="t" style="left:245.5px;top:697.83px;font-size:12.6px;color:#444;font-weight:bold;">Copyright &copy; <span style="color:#3c8dbc">HMS</span>.</div>

<div class="t" style="left:357.5px;top:697.83px;font-size:12.6px;color:#444;font-weight:normal;">All rights reserved.</div>

<div class="t" style="left:1217px;top:697.82px;font-size:12.5px;color:#444;font-weight:normal;"><b>HMS</b> Hotel | Version 1.0</div>

<div class="a" style="left:248px;top:683px;width:800px;height:45px;background:rgba(242,242,242,0.8)"></div>
<div class="t" style="left:260.8px;top:693.76px;font-size:10.8px;color:#111;font-weight:normal;letter-spacing:-0.3px">07:20</div>

<div class="t" style="left:1008.5px;top:693.86px;font-size:10.8px;color:#111;font-weight:normal;letter-spacing:0.1px">08:18</div>

<div class="a" style="left:306px;top:693px;width:687px;height:9px;border-radius:4.5px;background:linear-gradient(#d6d6d6,#cdcdcd)"></div>
<div class="a" style="left:306px;top:693px;width:610px;height:9px;border-radius:4.5px;background:linear-gradient(#5aa0e6,#4a8ad2)"></div>
<div class="a" style="left:905px;top:690px;width:14px;height:14px;border-radius:50%;background:linear-gradient(#fafafa,#d8d8d8);border:1px solid #a8a8a8"></div>
<div class="a" style="left:253px;top:714px;width:30px;height:20px;background:#e6e6e6;border:1px solid #adadad"></div>
<div class="a" style="left:261px;top:721px;width:5px;height:8px;background:#888"></div><div class="a" style="left:270px;top:721px;width:5px;height:8px;background:#888"></div>
<div class="a" style="left:303px;top:717px;width:24px;height:20px;background:#e6e6e6;border:1px solid #adadad"></div>
<svg style="left:308px;top:722px" width="14" height="8"><path d="M1 0 V8 M8 1 L2 6 L8 8 Z M13 1 L7 6 L13 8 Z" stroke="#777" stroke-width="1.5" fill="#777"/></svg>
<div class="a" style="left:335px;top:717px;width:24px;height:20px;background:#e6e6e6;border:1px solid #adadad"></div>
<div class="a" style="left:342px;top:723px;width:10px;height:6px;background:#777"></div>
<div class="a" style="left:367px;top:717px;width:24px;height:20px;background:#e6e6e6;border:1px solid #adadad"></div>
<svg style="left:372px;top:722px" width="14" height="8"><path d="M13 0 V8 M6 1 L12 6 L6 8 Z M1 1 L7 6 L1 8 Z" stroke="#777" stroke-width="1.5" fill="#777"/></svg>
<div class="a" style="left:441px;top:717px;width:24px;height:20px;background:#e6e6e6;border:1px solid #adadad"></div>
<svg style="left:446px;top:722px" width="14" height="7"><path d="M5 0 V5 H1 M9 0 V5 H13" stroke="#777" stroke-width="2" fill="none"/></svg>
<div class="a" style="left:832px;top:717px;width:24px;height:20px;background:#e6e6e6;border:1px solid #adadad"></div>
<svg style="left:836px;top:724px" width="16" height="5"><path d="M0.5 2.5 L3 0 V5 Z M15.5 2.5 L13 0 V5 Z M3 2.5 H13" stroke="#888" stroke-width="1" fill="#888"/></svg>
<div class="t" style="left:892.7px;top:723.10px;font-size:8.5px;color:#666;font-weight:normal;">80%</div>

<svg style="left:929px;top:721px" width="30" height="8"><path d="M0.5 7.5 L28 0.7 V8" stroke="#555" stroke-width="1.3" fill="none"/></svg>
<div class="t" style="left:976.6px;top:724.86px;font-size:10.8px;color:#111;font-weight:normal;">07:20/08:18</div>

</body></html>
